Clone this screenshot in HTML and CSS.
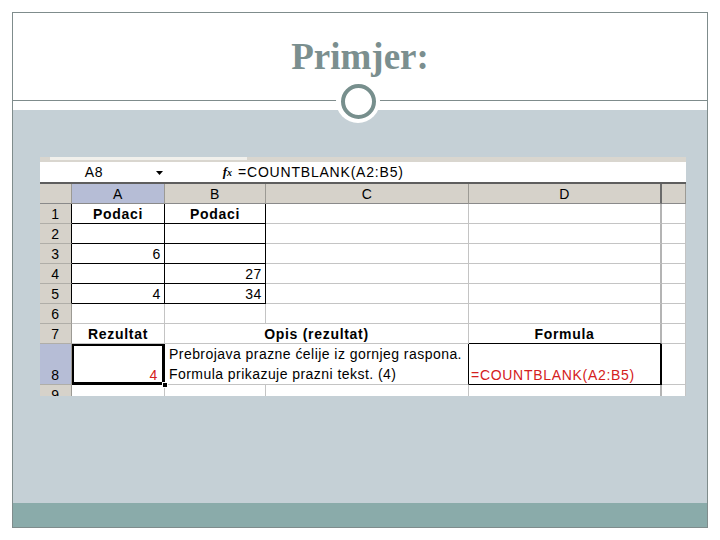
FILE: index.html
```html
<!DOCTYPE html>
<html lang="hr">
<head>
<meta charset="utf-8">
<title>Primjer</title>
<link rel="stylesheet" href="styles.css">
</head>
<body>
<div class="slide">
  <header class="head"><h1 class="title">Primjer:</h1></header>
  <div class="rule"><span class="halo"><span class="ring"></span></span></div>
  <main class="stage">
    <div class="xl">
      <div class="toolstrip"><span class="tool-light"></span></div>
      <div class="fbar">
        <div class="namebox">A8</div>
        <div class="dd"><svg width="7" height="4" viewBox="0 0 7 4"><path d="M0 0H7L3.5 4Z" fill="#000"/></svg></div>
        <div class="fx"><i>f</i><i class="x">x</i></div>
        <div class="ftext">=COUNTBLANK(A2:B5)</div>
      </div>
      <div class="gridwrap">
        <table class="grid">
          <colgroup>
            <col class="c-rh"><col class="c-a"><col class="c-b"><col class="c-c"><col class="c-d"><col class="c-e">
          </colgroup>
          <tr class="hdr">
            <th class="corner"></th><th class="sel">A</th><th>B</th><th>C</th><th class="dcol">D</th><th></th>
          </tr>
          <tr>
            <th class="rh blk">1</th><td class="b bold ctr">Podaci</td><td class="b bold ctr">Podaci</td><td></td><td class="dcol"></td><td></td>
          </tr>
          <tr>
            <th class="rh blk">2</th><td class="b"></td><td class="b"></td><td></td><td class="dcol"></td><td></td>
          </tr>
          <tr>
            <th class="rh blk">3</th><td class="b num">6</td><td class="b"></td><td></td><td class="dcol"></td><td></td>
          </tr>
          <tr>
            <th class="rh blk">4</th><td class="b"></td><td class="b num">27</td><td></td><td class="dcol"></td><td></td>
          </tr>
          <tr>
            <th class="rh blk">5</th><td class="b num">4</td><td class="b num">34</td><td></td><td class="dcol"></td><td></td>
          </tr>
          <tr>
            <th class="rh">6</th><td></td><td></td><td></td><td class="dcol"></td><td></td>
          </tr>
          <tr>
            <th class="rh">7</th><td class="bold ctr">Rezultat</td><td class="bold ctr" colspan="2">Opis (rezultat)</td><td class="dcol bold ctr bb">Formula</td><td></td>
          </tr>
          <tr class="tall">
            <th class="rh selr">8</th>
            <td class="active num red">4<span class="handle"></span></td>
            <td class="wrap br" colspan="2">Prebrojava prazne ćelije iz gornjeg raspona.<br>Formula prikazuje prazni tekst. (4)</td>
            <td class="dcol red fcell">=COUNTBLANK(A2:B5)</td>
            <td></td>
          </tr>
          <tr>
            <th class="rh">9</th><td></td><td></td><td></td><td class="dcol"></td><td></td>
          </tr>
        </table>
      </div>
    </div>
  </main>
  <footer class="foot"></footer>
</div>
</body>
</html>
```

FILE: styles.css
```css
* { box-sizing: border-box; }

html, body {
  margin: 0;
  padding: 0;
  background: #ffffff;
}

.slide {
  margin: 12px 0 0 12px;
  width: 696px;
  height: 516px;
  border: 1px solid #7f8c8c;
  display: flex;
  flex-direction: column;
  background: #ffffff;
}

.head {
  height: 87px;
  padding-top: 24px;
  text-align: center;
}

.title {
  margin: 0;
  font-family: "Liberation Serif", "Times New Roman", serif;
  font-weight: bold;
  font-size: 37px;
  line-height: 40px;
  color: #7b8f8f;
}

.rule {
  position: relative;
  height: 10px;
  border-top: 1px solid #7f8c8c;
  background: #ffffff;
  flex: none;
}

.halo {
  position: absolute;
  left: 50%;
  top: -22px;
  width: 44px;
  height: 44px;
  margin-left: -24px;
  border-radius: 50%;
  background: #ffffff;
  z-index: 2;
  display: flex;
  align-items: center;
  justify-content: center;
}

.ring {
  width: 35px;
  height: 35px;
  border-radius: 50%;
  border: 4px solid #778f8d;
}

.stage {
  height: 393px;
  background: #c5d0d6;
  padding: 47px 0 0 27px;
  flex: none;
}

.foot {
  height: 24px;
  background: #8aabaa;
  flex: none;
}

/* spreadsheet */
.xl {
  width: 646px;
  font-family: "Liberation Sans", Arial, sans-serif;
  font-size: 14px;
  letter-spacing: 0.6px;
  color: #000;
}

.toolstrip {
  height: 5px;
  background: #d9d6cf;
  display: flex;
}

.tool-light {
  margin-left: 10px;
  width: 197px;
  height: 3px;
  background: #f1f0ec;
}

.fbar {
  height: 22px;
  background: #ffffff;
  border-bottom: 2px solid #5e5e5e;
  display: flex;
  align-items: center;
}

.namebox {
  width: 108px;
  text-align: center;
  line-height: 20px;
}

.dd {
  width: 22px;
  display: flex;
  justify-content: center;
  padding-top: 2px;
}

.fx {
  width: 68px;
  text-align: right;
  padding-right: 6px;
  font-family: "Liberation Serif", "Times New Roman", serif;
  font-weight: bold;
  font-size: 13px;
  line-height: 20px;
  letter-spacing: 0;
}

.fx .x {
  font-size: 10px;
}

.ftext {
  line-height: 20px;
  letter-spacing: 0.8px;
}

.gridwrap {
  height: 212px;
  overflow: hidden;
  background: #ffffff;
}

.grid {
  border-collapse: separate;
  border-spacing: 0;
  table-layout: fixed;
  width: 646px;
  font-size: 14px;
}

.c-rh { width: 32px; }
.c-a { width: 93px; }
.c-b { width: 101px; }
.c-c { width: 203px; }
.c-d { width: 193px; }
.c-e { width: 24px; }

.grid th,
.grid td {
  height: 20px;
  padding: 0 3px;
  border-right: 1px solid #c4c4c4;
  border-bottom: 1px solid #c4c4c4;
  white-space: nowrap;
  overflow: hidden;
  line-height: 18px;
  vertical-align: bottom;
  font-weight: normal;
}

.hdr th {
  height: 20px;
  background: #d6d2ca;
  border-right: 1px solid #9c9a94;
  border-bottom: 1px solid #8a8a8a;
  text-align: center;
  vertical-align: middle;
}

.hdr th.sel { background: #b6bdd6; }
.hdr th.dcol { border-right: 2px solid #6a6a6a; }

.rh {
  background: #d6d2ca;
  text-align: center;
  border-right: 1px solid #9c9a94 !important;
  border-bottom: 1px solid #b0aea8 !important;
}

.rh.blk { border-right-color: #000 !important; }
.rh.selr { background: #b6bdd6; }

.grid td.b {
  border-right-color: #000;
  border-bottom-color: #000;
}

.grid td.dcol { border-right: 2px solid #b4b4b4; }

.bold {
  font-weight: bold !important;
  letter-spacing: 0.7px;
}

.ctr { text-align: center; }
.num { text-align: right; }
.red { color: #d42020; }

.grid td.bb { border-bottom-color: #000; }

.tall th,
.tall td { height: 41px; }

.grid td.active {
  position: relative;
  overflow: visible;
  box-shadow: inset 0 0 0 2px #000;
  border-bottom-color: #000;
  border-right-color: #000;
  padding-right: 6px;
}

.handle {
  position: absolute;
  right: -4px;
  bottom: -4px;
  width: 6px;
  height: 6px;
  background: #000;
  border: 1px solid #fff;
  z-index: 3;
}

.grid td.wrap {
  line-height: 20px;
  padding-left: 4px;
  padding-bottom: 0;
  letter-spacing: 0.45px;
}

.grid td.br { border-right-color: #000; }

.grid td.fcell {
  border-right: 2px solid #000;
  border-bottom-color: #000;
  padding-left: 2px;
  letter-spacing: 0.7px;
}
```
